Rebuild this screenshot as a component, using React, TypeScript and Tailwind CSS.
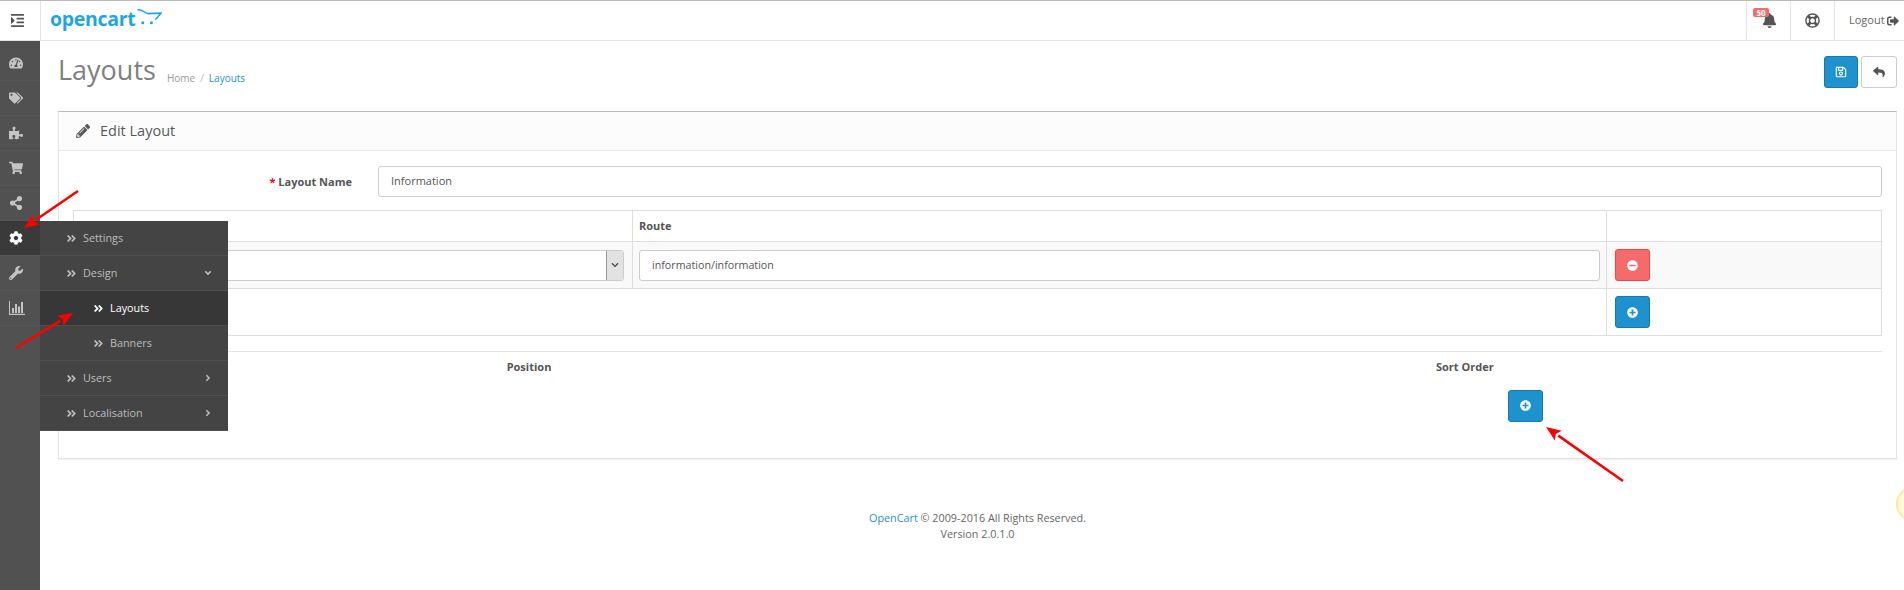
import React from "react";
import {
  FaIndent, FaTachometerAlt, FaTags, FaPuzzlePiece, FaShoppingCart, FaShareAlt, FaCog, FaWrench,
  FaPencilAlt, FaBell, FaRegLifeRing, FaSignOutAlt, FaRegSave, FaReply, FaMinusCircle,
  FaPlusCircle, FaAngleDoubleRight, FaAngleDown, FaAngleRight, FaChevronDown,
} from "react-icons/fa";

function BarsIcon() {
  return (
    <svg width="16" height="14" viewBox="0 0 16 14" fill="currentColor">
      <path d="M0 0h1v12.8h16V14H0z" />
      <rect x="3" y="7" width="2" height="5" />
      <rect x="6" y="3" width="2" height="9" />
      <rect x="9" y="5.5" width="2" height="6.5" />
      <rect x="12" y="1" width="2" height="11" />
    </svg>
  );
}

const rail = [
  { I: FaTachometerAlt }, { I: FaTags }, { I: FaPuzzlePiece }, { I: FaShoppingCart }, { I: FaShareAlt },
  { I: FaCog, active: true }, { I: FaWrench }, { I: BarsIcon },
];

const menu = [
  { t: "Settings" },
  { t: "Design", caret: "down" },
  { t: "Layouts", sub: true, active: true },
  { t: "Banners", sub: true },
  { t: "Users", caret: "right" },
  { t: "Localisation", caret: "right" },
];

function Arrow({ x1, y1, x2, y2 }: { x1: number; y1: number; x2: number; y2: number }) {
  const a = Math.atan2(y2 - y1, x2 - x1);
  const L = 15, W = 6;
  const bx = x2 - L * Math.cos(a), by = y2 - L * Math.sin(a);
  const nx = -Math.sin(a) * W, ny = Math.cos(a) * W;
  return (
    <>
      <line x1={x1} y1={y1} x2={bx} y2={by} stroke="#f00" strokeWidth="2.6" />
      <polygon points={`${x2},${y2} ${bx + nx},${by + ny} ${bx + 3 * Math.cos(a)},${by + 3 * Math.sin(a)} ${bx - nx},${by - ny}`} fill="#f00" />
    </>
  );
}

function Btn({ kind, children, className = "" }: { kind: "blue" | "red"; children: React.ReactNode; className?: string }) {
  return (
    <div className={`flex items-center justify-center w-[35px] h-[32px] rounded-[3px] border text-white text-[11px] ${kind === "blue" ? "bg-[#1e91cf] border-[#1978ab]" : "bg-[#f56b6b] border-[#f24545]"} ${className}`}>
      {children}
    </div>
  );
}

export default function App() {
  return (
    <div className="relative w-full h-[590px] overflow-hidden bg-white flex flex-col text-[11px] text-[#666]" style={{ fontFamily: '"Open Sans", sans-serif' }}>
      {/* header */}
      <header className="flex h-[41px] shrink-0 border-t border-t-[#bbb] border-b border-b-[#e4e4e4] bg-white">
        <div className="w-[41px] flex items-center justify-center pr-[6px] border-r border-[#e4e4e4] text-[#555] text-[15px]"><FaIndent /></div>
        <div className="flex-1 flex items-center pl-[9px]">
          <span className="text-[#1ea7de] text-[19.5px] font-bold leading-none tracking-[-0.3px] -mt-[3px]">opencart</span>
          <svg width="25" height="17" viewBox="0 0 26 17" className="ml-[2px] -mt-[8px]">
            <path d="M0.5 1.5 C6 1 8 5 12 5.5 L25 5 L19 12" fill="none" stroke="#1ea7de" strokeWidth="1.6" />
            <circle cx="6" cy="15" r="1.6" fill="#1ea7de" />
            <circle cx="15" cy="15" r="1.6" fill="#1ea7de" />
          </svg>
        </div>
        <div className="w-[44px] relative flex items-center justify-center border-l border-[#e4e4e4] text-[#555] text-[15px]">
          <FaBell className="ml-[1px]" />
          <span className="absolute left-[6px] top-[7px] w-[16px] h-[9px] text-center rounded-[2px] bg-[#f56b6b] text-white text-[8px] font-bold leading-[9px]">50</span>
        </div>
        <div className="w-[44px] flex items-center justify-center border-l border-[#e4e4e4] text-[#555] text-[15px]"><FaRegLifeRing /></div>
        <div className="w-[70px] flex items-center gap-[2px] pl-[14px] border-l border-[#e4e4e4] text-[#666] text-[11px]">Logout <FaSignOutAlt className="text-[12px] text-[#555] shrink-0" /></div>
      </header>

      <div className="flex flex-1 min-h-0">
        {/* rail */}
        <aside className="w-[40px] shrink-0 bg-[#515151] flex flex-col pt-[5px]">
          {rail.map(({ I, active }, i) => (
            <div key={i} className={`h-[35px] flex items-center pl-[9px] border-b border-[#575757] text-[14px] ${active ? "bg-[#3a3a3a] text-white" : "text-[#c4c4c4]"}`}>
              <I />
            </div>
          ))}
        </aside>

        {/* main */}
        <main className="flex-1 min-w-0 flex flex-col pl-[18px] pr-[7px]">
          <div className="flex items-center h-[70px] shrink-0">
            <h1 className="text-[27px] font-normal text-[#808080] leading-none -mt-[14px]">Layouts</h1>
            <div className="ml-[11px] mt-[5px] flex items-center text-[10px] text-[#999]">
              <span>Home</span>
              <span className="mx-[5px] text-[#bbb]">/</span>
              <span className="text-[#1e91cf]">Layouts</span>
            </div>
            <div className="ml-auto flex gap-[3px] mb-[9px]">
              <div className="flex items-center justify-center w-[34px] h-[32px] rounded-[3px] bg-[#1e91cf] border border-[#1978ab] text-white text-[12px]"><FaRegSave /></div>
              <div className="flex items-center justify-center w-[36px] h-[32px] rounded-[3px] bg-white border border-[#ccc] text-[#555] text-[12px]"><FaReply /></div>
            </div>
          </div>

          <section className="h-[348px] shrink-0 border border-[#e4e4e4] border-t-[#bbb] shadow-[0_1px_1px_rgba(0,0,0,0.05)] flex flex-col">
            <div className="h-[39px] shrink-0 flex items-center pl-[17px] bg-[#fcfcfc] border-b border-[#e8e8e8] text-[14.5px] text-[#595959]">
              <FaPencilAlt className="text-[14px] mr-[10px]" />
              Edit Layout
            </div>
            <div className="px-[14px] pt-[15px]">
              <div className="flex items-center h-[31px]">
                <label className="w-[305px] pr-[26px] text-right font-bold text-[#555] text-[11px] leading-none"><span className="text-[#f00]">* </span>Layout Name</label>
                <div className="flex-1 h-[31px] flex items-center px-[12px] border border-[#ccc] rounded-[3px] text-[#555] text-[11px]">Information</div>
              </div>

              <table className="w-full mt-[13px] table-fixed border-collapse border border-[#ddd]">
                <colgroup>
                  <col className="w-[559px]" />
                  <col />
                  <col className="w-[275px]" />
                </colgroup>
                <thead>
                  <tr className="h-[31px]">
                    <th className="border border-[#ddd]" />
                    <th className="border border-[#ddd] text-left px-[6px] font-bold text-[11px] text-[#555]">Route</th>
                    <th className="border border-[#ddd]" />
                  </tr>
                </thead>
                <tbody>
                  <tr className="h-[47px] bg-[#f9f9f9]">
                    <td className="border border-[#ddd] pl-[7px] pr-[8px]">
                      <div className="h-[31px] flex justify-end border border-[#ccc] rounded-[3px] bg-white">
                        <span className="w-[17px] flex items-center justify-center bg-[#e2e2e2] border-l border-[#999] rounded-r-[3px] text-[#444] text-[8px]"><FaChevronDown /></span>
                      </div>
                    </td>
                    <td className="border border-[#ddd] px-[6px]">
                      <div className="h-[31px] flex items-center px-[12px] border border-[#ccc] rounded-[3px] bg-white text-[#555] text-[10.7px]">information/information</div>
                    </td>
                    <td className="border border-[#ddd] pl-[8px] pr-[7px]">
                      <Btn kind="red"><FaMinusCircle /></Btn>
                    </td>
                  </tr>
                  <tr className="h-[47px]">
                    <td colSpan={2} className="border border-[#ddd]" />
                    <td className="border border-[#ddd] pl-[8px] pr-[7px]">
                      <Btn kind="blue"><FaPlusCircle /></Btn>
                    </td>
                  </tr>
                </tbody>
              </table>

              <div className="mt-[15px] border-t border-[#e2e2e2] grid grid-cols-[912px_1fr] pt-[7px]">
                <div className="text-center font-bold text-[11px] text-[#555]">Position</div>
                <div className="pl-[451px] font-bold text-[11px] text-[#555]">Sort Order</div>
              </div>
              <div className="pl-[1435px] mt-[14px]">
                <Btn kind="blue" className="h-[31px]"><FaPlusCircle /></Btn>
              </div>
            </div>
          </section>

          <footer className="mt-[51px] text-center text-[10.8px] leading-[16px] text-[#666]">
            <div><span className="text-[#1e91cf]">OpenCart</span> © 2009-2016 All Rights Reserved.</div>
            <div>Version 2.0.1.0</div>
          </footer>
        </main>
      </div>

      {/* flyout */}
      <nav className="absolute left-[40px] top-[221px] w-[188px] h-[210px] bg-[#444] flex flex-col">
        {menu.map((m) => (
          <div key={m.t} className={`h-[35px] flex items-center border-b border-[#4f4f4f] ${m.sub ? "pl-[53px]" : "pl-[26px]"} pr-[15px] text-[10.8px] ${m.active ? "bg-[#373737] text-white" : "text-[#bdbdbd]"}`}>
            <FaAngleDoubleRight className="text-[11px] mr-[6px] shrink-0" />
            <span className="flex-1">{m.t}</span>
            {m.caret === "down" && <FaAngleDown className="text-[10px]" />}
            {m.caret === "right" && <FaAngleRight className="text-[10px]" />}
          </div>
        ))}
      </nav>

      {/* annotations */}
      <svg className="absolute inset-0 pointer-events-none" width="1904" height="590">
        <Arrow x1={78} y1={191} x2={24} y2={228} />
        <Arrow x1={16} y1={348} x2={73} y2={313} />
        <Arrow x1={1623} y1={481} x2={1546} y2={427} />
      </svg>
      <div className="absolute left-[1896px] top-[487px] w-[34px] h-[34px] rounded-full border-2 border-[#fae8a5] bg-[#fff9dc]" />
    </div>
  );
}
